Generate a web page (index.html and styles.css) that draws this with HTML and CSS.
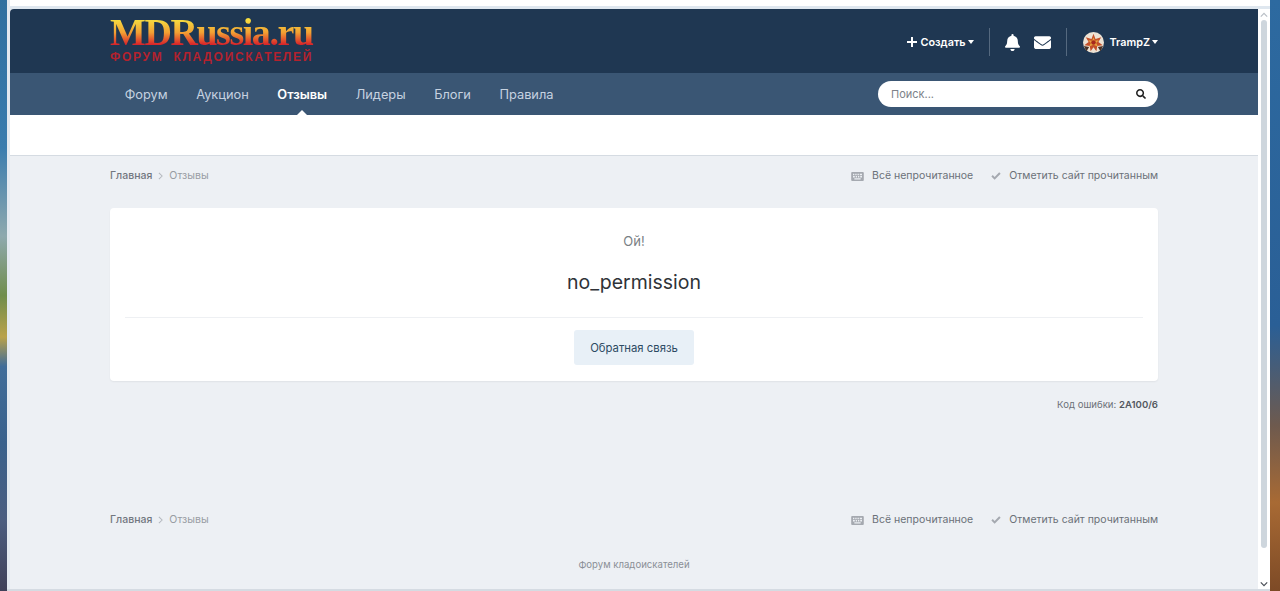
FILE: index.html
```html
<!DOCTYPE html>
<html lang="ru">
<head>
<meta charset="utf-8">
<title>MDRussia.ru</title>
<link rel="stylesheet" href="styles.css">
</head>
<body>
<div class="desktop">
  <div class="strip strip-left"></div>
  <div class="window">
    <div class="window-top"></div>
    <div class="window-body">
      <div class="page">
        <header class="head">
          <div class="wrap head-row">
            <a class="logo">
              <span class="logo-main">MDRussia.ru</span>
              <span class="logo-sub">ФОРУМ КЛАДОИСКАТЕЛЕЙ</span>
            </a>
            <div class="user">
              <a class="create">
                <svg class="i-plus" viewBox="0 0 10 10"><path d="M4 0h2v4h4v2H6v4H4V6H0V4h4z"/></svg>
                Создать<span class="caret"></span>
              </a>
              <span class="sep sep-a"></span>
              <svg class="i-bell" viewBox="0 0 448 512"><path d="M224 512c35 0 64-29 64-64H160c0 35 29 64 64 64zm215-150c-19-21-55-52-55-154 0-78-54-140-128-155V32a32 32 0 0 0-64 0v21C118 68 64 130 64 208c0 102-36 133-55 154-6 6-9 14-9 22 0 16 13 32 32 32h384c19 0 32-16 32-32 0-8-3-16-9-22z"/></svg>
              <svg class="i-mail" viewBox="0 0 512 512"><path d="M502 191c4-3 10 0 10 5v204c0 26-22 48-48 48H48c-26 0-48-22-48-48V196c0-5 6-8 10-5 22 17 52 39 154 113 21 15 57 48 92 48s72-33 92-48c102-74 132-96 154-113zM256 320c23 0 57-29 74-41 133-97 143-105 174-129 6-5 8-12 8-19v-19c0-26-22-48-48-48H48C22 64 0 86 0 112v19c0 7 3 14 8 19 31 24 41 32 174 129 17 12 51 41 74 41z"/></svg>
              <span class="sep sep-b"></span>
              <svg class="avatar" viewBox="0 0 24 24">
                <circle cx="12" cy="12" r="12" fill="#ece2d4"/>
                <path d="M1 16l6 1-3 5zM23 16l-6 1 3 5z" fill="#4a3226"/>
                <path d="M12 2l2.300 6 6.500-2-3.200 5.500 4.900 3.700-6.200.9-1 6-3.300-4.700-3.300 4.700-1-6-6.200-.9 4.900-3.700L3.200 6l6.500 2z" fill="#c4502a"/>
                <path d="M12 6l1.500 4 4.500-.5-3 3 2 4-5-2-5 2 2-4-3-3 4.500.5z" fill="#e8a63c"/>
                <circle cx="12" cy="12" r="2.600" fill="#a8281c"/>
              </svg>
              <a class="username">TrampZ<span class="caret"></span></a>
            </div>
          </div>
        </header>
        <nav class="nav">
          <div class="wrap nav-row">
            <ul class="tabs">
              <li class="tab">Форум</li>
              <li class="tab">Аукцион</li>
              <li class="tab tab-active">Отзывы</li>
              <li class="tab">Лидеры</li>
              <li class="tab">Блоги</li>
              <li class="tab">Правила</li>
            </ul>
            <div class="search">
              <span class="search-ph">Поиск...</span>
              <svg class="i-search" viewBox="0 0 512 512"><path d="M505 443L405 343c-5-4-11-7-17-7h-16c28-35 44-80 44-128C416 93 323 0 208 0S0 93 0 208s93 208 208 208c48 0 93-16 128-44v16c0 6 3 12 7 17l100 100c9 9 24 9 34 0l28-28c9-10 9-25 0-34zM208 336c-71 0-128-57-128-128S137 80 208 80s128 57 128 128-57 128-128 128z"/></svg>
            </div>
          </div>
        </nav>
        <div class="subnav"></div>
        <main class="content">
          <div class="wrap">
            <div class="crumbs crumbs-top">
              <div class="crumb-list">
                <span class="crumb-home">Главная</span>
                <svg class="i-chev" viewBox="0 0 6 10"><path d="M1 1l4 4-4 4" fill="none" stroke="currentColor" stroke-width="1.300"/></svg>
                <span class="crumb-cur">Отзывы</span>
              </div>
              <div class="crumb-links">
                <span class="crumb-link">
                  <svg class="i-kbd" viewBox="0 0 14 10"><path fill-rule="evenodd" d="M1 0h12a1 1 0 0 1 1 1v8a1 1 0 0 1-1 1H1a1 1 0 0 1-1-1V1a1 1 0 0 1 1-1zm1 2v1.500h1.500V2zm2.500 0v1.500H6V2zM7 2v1.500h1.500V2zm2.500 0v1.500H12V2zM2 4.500V6h2V4.500zm3 0V6h1.500V4.500zm2.500 0V6H9V4.500zm2.500 0V6h2V4.500zM3.500 7v1.200h7V7z"/></svg>
                  Всё непрочитанное
                </span>
                <span class="crumb-link">
                  <svg class="i-check" viewBox="0 0 12 10"><path d="M4.300 9.700L.2 5.600 2 3.800l2.300 2.300L10 .3l1.800 1.800z"/></svg>
                  Отметить сайт прочитанным
                </span>
              </div>
            </div>
            <section class="card">
              <p class="oops">Ой!</p>
              <h1 class="err-title">no_permission</h1>
              <hr class="rule">
              <a class="btn">Обратная связь</a>
            </section>
            <p class="err-code">Код ошибки: <b>2A100/6</b></p>
            <div class="crumbs crumbs-bottom">
              <div class="crumb-list">
                <span class="crumb-home">Главная</span>
                <svg class="i-chev" viewBox="0 0 6 10"><path d="M1 1l4 4-4 4" fill="none" stroke="currentColor" stroke-width="1.300"/></svg>
                <span class="crumb-cur">Отзывы</span>
              </div>
              <div class="crumb-links">
                <span class="crumb-link">
                  <svg class="i-kbd" viewBox="0 0 14 10"><path fill-rule="evenodd" d="M1 0h12a1 1 0 0 1 1 1v8a1 1 0 0 1-1 1H1a1 1 0 0 1-1-1V1a1 1 0 0 1 1-1zm1 2v1.500h1.500V2zm2.500 0v1.500H6V2zM7 2v1.500h1.500V2zm2.500 0v1.500H12V2zM2 4.500V6h2V4.500zm3 0V6h1.500V4.500zm2.500 0V6H9V4.500zm2.500 0V6h2V4.500zM3.500 7v1.200h7V7z"/></svg>
                  Всё непрочитанное
                </span>
                <span class="crumb-link">
                  <svg class="i-check" viewBox="0 0 12 10"><path d="M4.300 9.700L.2 5.600 2 3.800l2.300 2.300L10 .3l1.800 1.800z"/></svg>
                  Отметить сайт прочитанным
                </span>
              </div>
            </div>
            <p class="foot-note">Форум кладоискателей</p>
          </div>
        </main>
      </div>
      <div class="scrollbar">
        <svg class="sb-arrow" viewBox="0 0 10 6"><path d="M1 5l4-4 4 4" fill="none" stroke="#b9bfc6" stroke-width="1.500"/></svg>
        <div class="sb-thumb"></div>
        <svg class="sb-arrow" viewBox="0 0 10 6"><path d="M1 1l4 4 4-4" fill="none" stroke="#4a4f57" stroke-width="1.500"/></svg>
      </div>
    </div>
    <div class="window-bottom"></div>
  </div>
  <div class="strip strip-right"></div>
</div>
</body>
</html>
```
FILE: styles.css
```css
* { box-sizing: border-box; }
html, body { margin: 0; height: 100%; overflow: hidden; }
body { font-family: Inter, "Liberation Sans", sans-serif; color: #353c41; }

.desktop { display: flex; width: 1280px; height: 591px; overflow: hidden; }
.strip { flex: none; }
.strip-left {
  width: 7px;
  background: linear-gradient(180deg, #2f6f9f 0, #3a7cae 25%, #8ea9ae 40%, #6f8d4c 50%, #b9a24a 57%, #3f6c99 62%, #39618c 75%, #4b5d80 88%, #3f4058 100%);
}
.strip-right {
  width: 10px;
  background: linear-gradient(180deg, #2d6aa0 0, #2a5f96 55%, #6e5a4e 72%, #a86a34 85%, #7d4a26 100%);
}
.window { flex: 1; display: flex; flex-direction: column; min-width: 0; background: #e3e9f0; }
.window-top { flex: none; height: 9px; background: linear-gradient(180deg, #fff 0 6px, #dfe7ef 6px 9px); margin-left: 3px; }
.window-body { flex: 1; display: flex; min-height: 0; }
.window-bottom { flex: none; height: 2px; background: #d5dbe2; }

.page { flex: 1; min-width: 0; margin-left: 3px; background: #edf0f4; display: flex; flex-direction: column; overflow: hidden; border-radius: 4px 0 0 0; }
.wrap { width: 1048px; margin: 0 auto; }

.head { flex: none; height: 64px; background: #1f3752; }
.head-row { display: flex; align-items: center; justify-content: space-between; height: 64px; }
.logo { display: flex; flex-direction: column; width: 204px; margin-top: -4px; }
.logo-main {
  font: bold 38px/37px "Liberation Serif", serif;
  letter-spacing: -1.450px;
  background: linear-gradient(180deg, #f6dd40 15%, #f2a033 50%, #d8262a 82%);
  -webkit-background-clip: text;
  background-clip: text;
  color: transparent;
  white-space: nowrap;
}
.logo-sub { font: bold 12px/13px "Liberation Sans", sans-serif; letter-spacing: 1.700px; word-spacing: 5px; color: #b3222e; white-space: nowrap; }

.user { display: flex; align-items: center; color: #fff; font-size: 10.800px; font-weight: 600; margin-top: 2px; }
.create { display: flex; align-items: center; }
.i-plus { width: 10px; height: 10px; fill: #fff; margin-right: 4px; }
.caret { display: inline-block; width: 0; height: 0; border: 3.500px solid transparent; border-top: 4px solid #fff; border-bottom: 0; margin-left: 2px; }
.sep { width: 1px; height: 28px; background: #55697f; }
.sep-a { margin: 0 15px; }
.sep-b { margin: 0 16px 0 15px; }
.i-bell { width: 15px; height: 17px; fill: #fff; margin-right: 14px; }
.i-mail { width: 17px; height: 17px; fill: #fff; }
.avatar { width: 21px; height: 21px; margin-right: 6px; }
.username { display: flex; align-items: center; }

.nav { flex: none; height: 42px; background: #3a5674; }
.nav-row { display: flex; align-items: center; justify-content: space-between; height: 42px; }
.tabs { display: flex; list-style: none; margin: 0; padding: 0 0 0 .4px; }
.tab { padding: 0 14.300px; font-size: 12.800px; line-height: 43px; height: 42px; color: #c6d2e0; }
.tab-active { position: relative; font-weight: 600; color: #fff; }
.tab-active::after { content: ""; position: absolute; left: 50%; bottom: 0; margin-left: -5px; border: 5px solid transparent; border-bottom-color: #fff; border-top: 0; }
.search { width: 280px; height: 26px; border-radius: 13px; background: #fff; display: flex; align-items: center; justify-content: space-between; padding: 0 12px 0 13px; }
.search-ph { font-size: 11px; color: #7d8289; }
.i-search { width: 10px; height: 10px; fill: #222; }

.subnav { flex: none; height: 41px; background: #fff; border-bottom: 1px solid #d5dbe2; }
.content { flex: 1; }
.crumbs { display: flex; justify-content: space-between; align-items: center; font-size: 10.500px; line-height: 14px; }
.crumbs-top { padding-top: 13px; }
.crumbs-bottom { margin-top: 102px; }
.crumb-list { display: flex; align-items: center; }
.crumb-home { color: #72777f; font-weight: 500; }
.crumb-cur { color: #989ca3; }
.i-chev { width: 5px; height: 8px; margin: 0 6px 0 6px; color: #b5b9bf; }
.crumb-links { display: flex; gap: 18px; color: #6b7078; }
.crumb-link { display: flex; align-items: center; }
.i-kbd { width: 13px; height: 9px; fill: #a5a9b0; margin-right: 8px; }
.i-check { width: 10px; height: 8px; fill: #a5a9b0; margin-right: 8px; }

.card { margin-top: 25px; height: 173px; background: #fff; border-radius: 4px; box-shadow: 0 1px 2px rgba(0,0,0,.06); display: flex; flex-direction: column; align-items: center; padding: 0 15px; }
.oops { margin: 25px 0 0; font-size: 13px; line-height: 16px; color: #7a7f85; }
.err-title { margin: 18px 0 0; font-size: 19.500px; line-height: 30px; font-weight: 400; color: #2f3338; }
.rule { align-self: stretch; margin: 20px 0 0; border: 0; border-top: 1px solid #eef0f3; }
.btn { margin-top: 12px; width: 120px; height: 35px; background: #e8f0f7; border-radius: 3px; display: flex; align-items: center; justify-content: center; font-size: 11.300px; color: #2c4a63; }
.err-code { margin: 18px 0 0; text-align: right; font-size: 9.600px; line-height: 12px; color: #6c7178; }
.err-code b { font-weight: 600; color: #53585f; }
.foot-note { margin: 32px 0 0; text-align: center; font-size: 9.600px; line-height: 12px; color: #8a8f96; }

.scrollbar { flex: none; width: 12px; background: #fff; display: flex; flex-direction: column; align-items: center; padding: 3px 0 2px; }
.sb-arrow { flex: none; width: 8px; height: 6px; }
.sb-thumb { flex: 1; width: 6px; margin: 2px 0 33px; background: #ced6dd; border-radius: 3px; }
```
